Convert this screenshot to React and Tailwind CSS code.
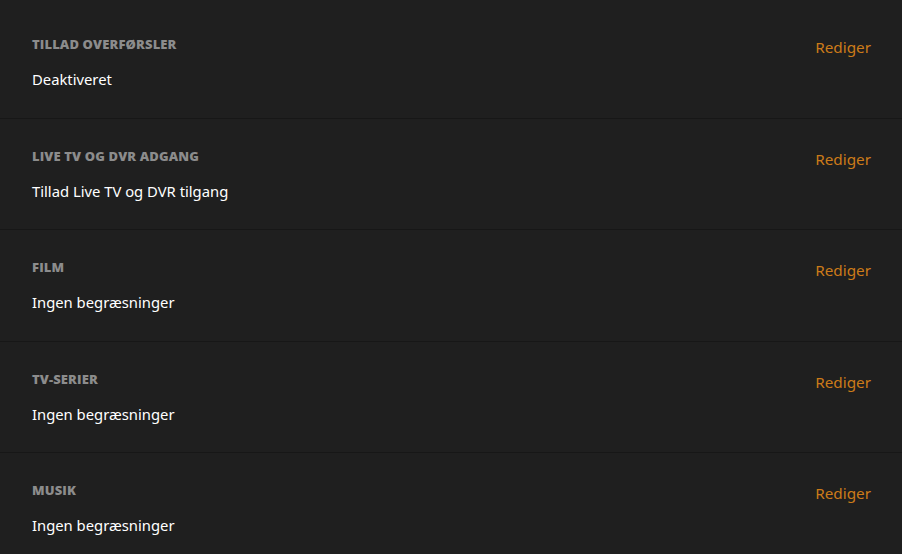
const rows = [
  { label: 'Tillad overførsler', value: 'Deaktiveret' },
  { label: 'Live TV og DVR adgang', value: 'Tillad Live TV og DVR tilgang' },
  { label: 'Film', value: 'Ingen begræsninger' },
  { label: 'TV-serier', value: 'Ingen begræsninger' },
  { label: 'Musik', value: 'Ingen begræsninger' }
];

export default function App() {
  return (
    <div className="h-[554px] w-[902px] overflow-hidden bg-[#1f1f1f] pt-[7px] font-['Open_Sans',sans-serif]">
      {rows.map((row) => (
        <div key={row.label} className="flex h-[111.5px] items-start justify-between border-b border-[#171717] pl-8 pr-[31px] pt-[29px]">
          <div>
            <h3 className="text-[13px] font-extrabold uppercase leading-4 tracking-[0.01em] text-[#8c8c8c]">{row.label}</h3>
            <p className="mt-[17px] font-['Noto_Sans',sans-serif] text-[14.8px] leading-5 text-white">{row.value}</p>
          </div>
          <button className="font-['Noto_Sans',sans-serif] text-[15.3px] leading-[22px] text-[#cc7b19]">Rediger</button>
        </div>
      ))}
    </div>
  );
}
